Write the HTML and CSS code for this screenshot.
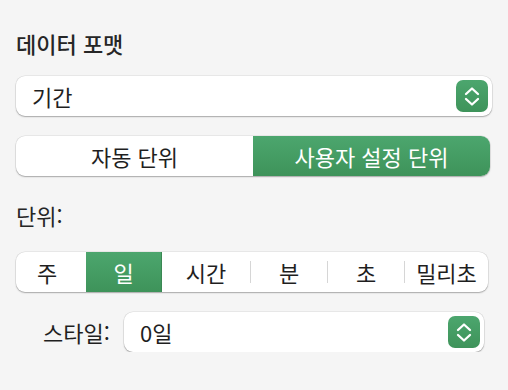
FILE: index.html
```html
<!DOCTYPE html>
<html lang="ko">
<head>
  <meta charset="UTF-8">
  <title>데이터 포맷</title>
  <link rel="stylesheet" href="styles.css">
</head>
<body>
  <div class="panel">
    <h2 class="title">데이터 포맷</h2>

    <div class="popup">
      <span class="popup-text">기간</span>
      <span class="stepper">
        <svg width="32" height="32" viewBox="0 0 32 32"><path d="M10 14 L16 8.5 L22 14 M10 19 L16 24.5 L22 19" fill="none" stroke="#fff" stroke-width="2.3" stroke-linecap="round" stroke-linejoin="round"/></svg>
      </span>
    </div>

    <div class="segmented mode">
      <div class="seg">자동 단위</div>
      <div class="seg selected">사용자 설정 단위</div>
    </div>

    <div class="label">단위:</div>

    <div class="segmented units">
      <div class="seg first">주</div>
      <div class="seg selected">일</div>
      <div class="seg">시간</div>
      <span class="divider"></span>
      <div class="seg">분</div>
      <span class="divider"></span>
      <div class="seg">초</div>
      <span class="divider"></span>
      <div class="seg last">밀리초</div>
    </div>

    <div class="style-row">
      <span class="style-label">스타일:</span>
      <div class="popup small">
        <span class="popup-text">0일</span>
        <span class="stepper">
          <svg width="32" height="32" viewBox="0 0 32 32"><path d="M10 14 L16 8.5 L22 14 M10 19 L16 24.5 L22 19" fill="none" stroke="#fff" stroke-width="2.3" stroke-linecap="round" stroke-linejoin="round"/></svg>
        </span>
      </div>
    </div>
  </div>
</body>
</html>
```

FILE: styles.css
```css
/* 패널 전체 */
body {
  margin: 0;
  background: #f5f5f5;
  font-family: "Noto Sans CJK KR", "Noto Sans", sans-serif;
  color: #1f1f1f;
}

.panel {
  display: flex;
  flex-direction: column;
  padding: 31px 16px 0 16px;
}

.title {
  margin: 0;
  font-size: 22px;
  font-weight: 500;
  line-height: 24px;
  color: #262626;
}

/* 팝업 버튼 */
.popup {
  margin-top: 21px;
  height: 40px;
  box-sizing: border-box;
  display: flex;
  align-items: center;
  justify-content: space-between;
  padding: 0 4px 0 16px;
  background: #fff;
  border-radius: 9px;
  box-shadow: 0 0 0 0.5px rgba(0, 0, 0, 0.1), 0 1px 1.5px rgba(0, 0, 0, 0.28);
  font-size: 22px;
}

.stepper {
  width: 32px;
  height: 32px;
  border-radius: 7px;
  background: linear-gradient(#4ca66e, #3e935a);
  display: flex;
}

/* 세그먼트 컨트롤 */
.segmented {
  margin-top: 20px;
  height: 40px;
  display: flex;
  align-items: stretch;
  background: #fff;
  border-radius: 9px;
  overflow: hidden;
  box-shadow: 0 0 0 0.5px rgba(0, 0, 0, 0.1), 0 1px 1.5px rgba(0, 0, 0, 0.28);
  font-size: 22px;
}

.seg {
  display: flex;
  align-items: center;
  justify-content: center;
}

.seg.selected {
  background: linear-gradient(#4ca66e, #3e935a);
  color: #fff;
}

.mode {
  margin-right: 2px;
}

.mode .seg {
  flex: 1;
}

.units {
  margin-top: 25px;
  margin-right: 4px;
}

.units .seg {
  flex: 0 0 76px;
}

.units .seg.first {
  flex-basis: 70px;
  padding-right: 8px;
  box-sizing: border-box;
}

.units .seg.selected {
  box-sizing: border-box;
  border-right: 1px solid #3a8853;
}

.units .seg:nth-child(3) {
  flex-basis: 88px;
}

.units .seg.last {
  flex: 1;
}

.divider {
  width: 1px;
  height: 22px;
  align-self: center;
  background: #d6d6d6;
}

.label {
  margin-top: 27px;
  font-size: 22px;
  line-height: 24px;
  color: #262626;
}

/* 스타일 행 */
.style-row {
  margin-top: 20px;
  display: flex;
  align-items: center;
  padding-left: 27px;
  margin-right: 8px;
}

.style-label {
  flex: 0 0 81px;
  font-size: 22px;
}

.popup.small {
  margin-top: 0;
  flex: 1;
}
```
